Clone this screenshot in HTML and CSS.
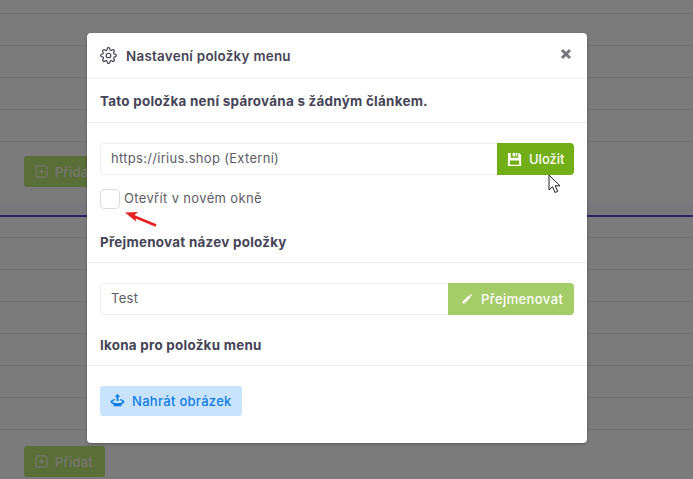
FILE: index.html
```html
<!DOCTYPE html>
<html lang="cs">
<head>
<meta charset="utf-8">
<title>Nastavení položky menu</title>
<link rel="stylesheet" href="styles.css">
</head>
<body>
<div class="backdrop">
  <section class="group group-first">
    <div class="row"></div><div class="row"></div><div class="row"></div><div class="row"></div><div class="row"></div>
    <div class="row row-action">
      <span class="add-btn"><svg class="add-icon" viewBox="0 0 14 14"><rect x="1" y="1" width="12" height="12" rx="1.5"/><path d="M7 4v6M4 7h6"/></svg>Přidat</span>
    </div>
  </section>
  <div class="band"></div>
  <section class="group group-second">
    <div class="row"></div><div class="row"></div><div class="row"></div><div class="row"></div><div class="row"></div><div class="row"></div><div class="row"></div>
    <div class="row row-action">
      <span class="add-btn"><svg class="add-icon" viewBox="0 0 14 14"><rect x="1" y="1" width="12" height="12" rx="1.5"/><path d="M7 4v6M4 7h6"/></svg>Přidat</span>
    </div>
  </section>
</div>
<div class="scrim"></div>
<div class="modal">
  <header class="modal-head">
    <svg class="gear" viewBox="0 0 24 24"><circle cx="12" cy="12" r="3.2"/><path d="M19.4 15a1.65 1.65 0 0 0 .33 1.82l.06.06a2 2 0 1 1-2.83 2.83l-.06-.06a1.65 1.65 0 0 0-2.82 1.17V21a2 2 0 0 1-4 0v-.09A1.65 1.65 0 0 0 7.2 19.74l-.06.06a2 2 0 1 1-2.83-2.83l.06-.06A1.65 1.65 0 0 0 3.2 14H3a2 2 0 0 1 0-4h.09A1.65 1.65 0 0 0 4.26 7.2l-.06-.06a2 2 0 1 1 2.83-2.83l.06.06A1.65 1.65 0 0 0 10 3.2V3a2 2 0 0 1 4 0v.09a1.65 1.65 0 0 0 2.8 1.17l.06-.06a2 2 0 1 1 2.83 2.83l-.06.06A1.65 1.65 0 0 0 20.8 10H21a2 2 0 0 1 0 4h-.09a1.65 1.65 0 0 0-1.51 1z"/></svg>
    <h1 class="modal-title">Nastavení položky menu</h1>
    <svg class="close" viewBox="0 0 12 12"><path d="M2 2l8 8M10 2l-8 8"/></svg>
  </header>
  <div class="section-head section-head-notice">Tato položka není spárována s žádným článkem.</div>
  <div class="block block-url">
    <div class="input-group">
      <div class="field">https://irius.shop (Externí)</div>
      <span class="btn btn-save"><svg class="btn-icon" viewBox="0 0 16 16"><path class="solid" fill-rule="evenodd" d="M1 1h3v5h8V1h1l2 2v12H1zM3 9v4.500h10V9z"/><rect class="solid" x="6" y="1" width="5" height="3.500"/><rect class="slot" x="8.500" y="1.800" width="1.300" height="2"/></svg>Uložit</span>
    </div>
    <label class="check-row"><span class="checkbox"></span><span class="check-label">Otevřít v novém okně</span></label>
  </div>
  <div class="section-head section-head-rename">Přejmenovat název položky</div>
  <div class="block block-rename">
    <div class="input-group">
      <div class="field">Test</div>
      <span class="btn btn-rename"><svg class="btn-icon pencil" viewBox="0 0 16 16"><path class="solid" d="M2 11.500L10.500 3l2.500 2.500L4.500 14H2zM11.500 2l1-1 2.500 2.500-1 1z"/></svg>Přejmenovat</span>
    </div>
  </div>
  <div class="section-head section-head-icon">Ikona pro položku menu</div>
  <div class="block block-upload">
    <span class="btn-upload"><svg class="upload-icon" viewBox="0 0 18 16"><path class="blue" d="M9 0l3.500 3.500H10.200V8.500H7.800V3.500H5.500z"/><path class="blue" fill-rule="evenodd" d="M6 6C3 6.500.5 7.500.5 9.500.5 11 2 12 4 12.500V14c0 .6.5 1 1 1h8c.5 0 1-.4 1-1v-1.500c2-.5 3.500-1.500 3.500-3C17.500 7.500 15 6.500 12 6v1.700c1.800.3 3 .9 3 1.800 0 1.200-2.700 1.800-6 1.800s-6-.6-6-1.800c0-.9 1.200-1.500 3-1.800z"/></svg>Nahrát obrázek</span>
  </div>
</div>
<svg class="arrow" viewBox="0 0 34 16"><path class="arrow-head" d="M1 1.500l13-.5-3.500 3 1 2 .5 4.500z"/><path class="arrow-line" d="M9 5l23 9.500"/></svg>
<svg class="cursor" viewBox="0 0 14 20"><path d="M1 1v15l3.500-3.300 2.500 5.800 2.700-1.200-2.500-5.500H12z"/></svg>
</body>
</html>
```
FILE: styles.css
```css
* { box-sizing: border-box; }
html, body { margin: 0; padding: 0; height: 100%; overflow: hidden; }
body { font-family: "Inter", "Liberation Sans", sans-serif; background: #f6f6f6; position: relative; }

.backdrop { display: flex; flex-direction: column; height: 479px; overflow: hidden; }
.group { flex: none; }
.row { height: 32px; border-bottom: 1px solid #e0e0e0; }
.group-first .row:first-child { height: 14px; }
.group-first .row-action { height: 60px; border-bottom: 0; padding: 14px 0 0 24px; }
.band { height: 15px; background: #eeeef8; border-bottom: 2px solid #6040d0; flex: none; }
.group-second .row:first-child { height: 21px; }
.group-second .row-action { height: 47px; border-bottom: 0; padding: 16px 0 0 24px; }
.add-btn { display: inline-flex; align-items: center; gap: 7px; height: 31px; width: 81px; padding-left: 11px; background: #b4dc70; color: #e8ecde; font-size: 13px; font-weight: 500; letter-spacing: .2px; border-radius: 3px; }
.add-icon { width: 13px; height: 13px; fill: none; stroke: #e8ecde; stroke-width: 1.200; }

.scrim { position: absolute; inset: 0; background: rgba(0, 0, 0, .5); }
.modal { position: absolute; left: 87px; top: 33px; width: 500px; height: 410px; background: #fff; border-radius: 4px; box-shadow: 0 1px 3px rgba(0,0,0,.3); color: #454456; }
.modal-head { display: flex; align-items: center; height: 46px; padding: 0 15px 0 13px; border-bottom: 1px solid #f3f3f4; }
.gear { width: 17px; height: 17px; fill: none; stroke: #454456; stroke-width: 1.700; flex: none; }
.modal-title { margin: 0 0 0 9px; font-size: 13.400px; font-weight: 600; flex: 1; letter-spacing: .27px; }
.close { width: 12px; height: 12px; fill: none; stroke: #77777f; stroke-width: 3; flex: none; margin-top: -3px; }

.section-head { display: flex; align-items: center; padding: 0 13px; font-size: 13.400px; font-weight: 700; letter-spacing: .27px; border-bottom: 1px solid #ececee; }
.section-head-notice { height: 44px; }
.section-head-rename { height: 39px; padding-bottom: 3px; }
.section-head-icon { height: 39px; padding-bottom: 2px; }

.block { padding: 0 13px; }
.block-url { padding-top: 20px; height: 101px; }
.block-rename { padding-top: 20px; height: 64px; }
.block-upload { padding-top: 20px; }

.input-group { display: flex; height: 32px; }
.field { flex: 1; display: flex; align-items: center; padding: 0 10px 2px; border: 1px solid #eeeef0; border-right: 0; border-radius: 4px 0 0 4px; font-size: 13px; color: #5d5d66; letter-spacing: .3px; }
.btn { display: inline-flex; align-items: center; gap: 7px; padding-left: 10px; color: #fff; font-size: 13px; font-weight: 500; border-radius: 0 4px 4px 0; flex: none; }
.btn-save { width: 77px; background: #72ae16; }
.btn-rename { width: 126px; padding-left: 13px; gap: 8px; background: #a4cc68; letter-spacing: .4px; }
.btn-icon { width: 15px; height: 15px; flex: none; }
.pencil { width: 12px; height: 12px; }
.solid { fill: #fff; }
.slot { fill: #72ae16; }

.check-row { display: flex; align-items: center; gap: 4px; margin-top: 14px; }
.checkbox { width: 20px; height: 20px; border: 1px solid #d9dbe0; border-radius: 4px; flex: none; }
.check-label { font-size: 13px; color: #5d5d66; letter-spacing: .35px; padding-bottom: 2px; }

.btn-upload { display: inline-flex; align-items: center; gap: 7px; width: 142px; height: 30px; padding: 0 0 1px 10px; background: #c9e3fd; border-radius: 3px; color: #0d7ce6; font-size: 13px; font-weight: 500; letter-spacing: .3px; }
.upload-icon { width: 15px; height: 13px; flex: none; }
.blue { fill: #0d7ce6; }

.arrow { position: absolute; left: 124px; top: 211px; width: 34px; height: 16px; overflow: visible; }
.arrow-head { fill: #ea1f1f; }
.arrow-line { stroke: #ea1f1f; stroke-width: 2.500; fill: none; }
.cursor { position: absolute; left: 548px; top: 174px; width: 14px; height: 20px; }
.cursor path { fill: #fff; stroke: #222; stroke-width: 1; }
```
